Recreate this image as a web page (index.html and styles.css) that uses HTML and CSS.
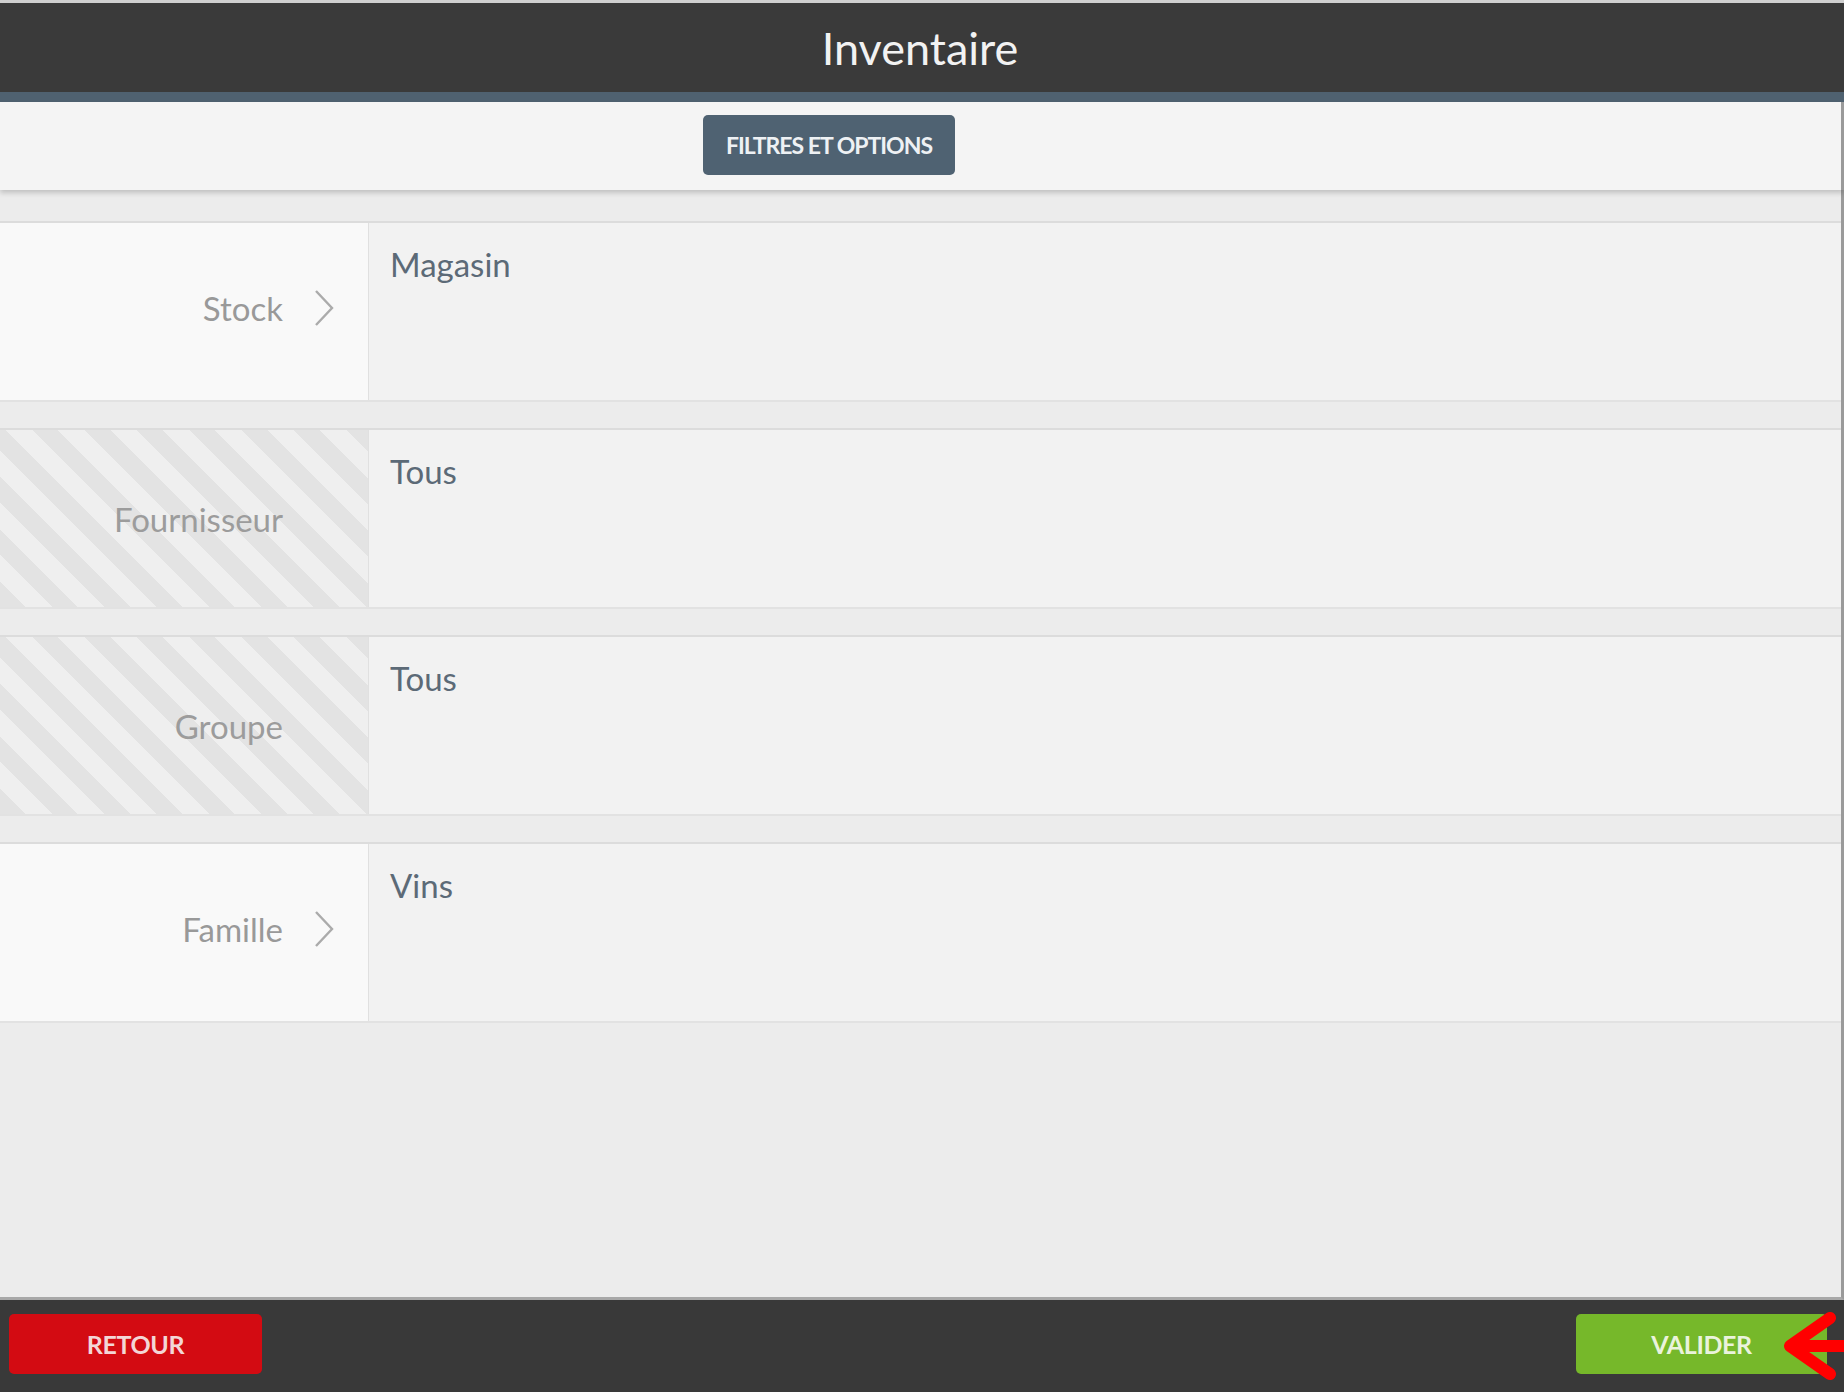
FILE: index.html
```html
<!DOCTYPE html>
<html lang="fr">
<head>
<meta charset="UTF-8">
<meta name="viewport" content="width=device-width, initial-scale=1.0">
<title>Inventaire</title>
<link rel="stylesheet" href="styles.css">
</head>
<body>

<div class="topbar">
    <h1>Inventaire</h1>
</div>

<div class="toolbar">
    <button class="btn-options">FILTRES ET OPTIONS</button>
</div>

<div class="rows">
    <div class="row">
        <div class="row-label">
            <span>Stock</span>
            <span class="chev">
                <svg width="20" height="38" viewBox="0 0 20 38"><path d="M2 2 L18 19 L2 36" fill="none" stroke="#ababab" stroke-width="2.4"/></svg>
            </span>
        </div>
        <div class="row-value">Magasin</div>
    </div>
    <div class="row disabled">
        <div class="row-label">
            <span>Fournisseur</span>
            <span class="chev"></span>
        </div>
        <div class="row-value">Tous</div>
    </div>
    <div class="row disabled">
        <div class="row-label">
            <span>Groupe</span>
            <span class="chev"></span>
        </div>
        <div class="row-value">Tous</div>
    </div>
    <div class="row">
        <div class="row-label">
            <span>Famille</span>
            <span class="chev">
                <svg width="20" height="38" viewBox="0 0 20 38"><path d="M2 2 L18 19 L2 36" fill="none" stroke="#ababab" stroke-width="2.4"/></svg>
            </span>
        </div>
        <div class="row-value">Vins</div>
    </div>
</div>

<div class="filler"></div>

<div class="footer">
    <button class="btn btn-back">RETOUR</button>
    <button class="btn btn-ok">VALIDER</button>
    <!-- annotation arrow from the screenshot -->
    <svg class="arrow" width="70" height="72" viewBox="0 0 70 72">
        <path d="M52 6 L12 34 L52 62 M14 34 L70 34" fill="none" stroke="#ff0000" stroke-width="12" stroke-linecap="round" stroke-linejoin="round"/>
    </svg>
</div>

</body>
</html>
```

FILE: styles.css
```css
body {
    margin: 0;
    padding: 0;
    width: 1844px;
    height: 1392px;
    display: flex;
    flex-direction: column;
    background-color: #ececec;
    font-family: Lato, "Open Sans", sans-serif;
    overflow: hidden;
}

.topbar {
    height: 89px;
    border-top: 3px solid #cfcfcf;
    border-bottom: 10px solid #4f6170;
    background-color: #3a3a3a;
    display: flex;
    align-items: center;
    justify-content: center;
    padding-right: 4px;
}

.topbar h1 {
    margin: 0;
    font-size: 45px;
    font-weight: 400;
    color: #f2f2f2;
}

.toolbar {
    height: 88px;
    background-color: #f4f4f4;
    border-right: 3px solid #9a9a9a;
    box-shadow: 0 3px 5px rgba(0, 0, 0, 0.18);
    position: relative;
    z-index: 1;
    padding-top: 13px;
    padding-left: 703px;
    box-sizing: border-box;
}

.btn-options {
    width: 252px;
    height: 60px;
    border: none;
    border-radius: 5px;
    background-color: #4f6272;
    color: #eef1f4;
    font-family: Lato, sans-serif;
    font-size: 23px;
    font-weight: 700;
    letter-spacing: -1px;
    padding: 0;
}

.rows {
    padding-top: 31px;
    display: flex;
    flex-direction: column;
    gap: 26px;
    border-right: 3px solid #9a9a9a;
}

.row {
    display: grid;
    grid-template-columns: 369px 1fr;
    height: 181px;
    box-sizing: border-box;
    border-top: 2px solid #dcdcdc;
    border-bottom: 2px solid #e2e2e2;
}

.row-label {
    background-color: #f9f9f9;
    border-right: 1px solid #e0e0e0;
    display: flex;
    align-items: center;
    justify-content: flex-end;
    font-size: 33px;
    color: #999999;
    padding-bottom: 7px;
}

.row.disabled .row-label {
    background: repeating-linear-gradient(45deg, #e3e3e3 0, #e3e3e3 18px, #efefef 18px, #efefef 37px);
    color: #9c9c9c;
    padding-bottom: 0;
}

.chev {
    width: 85px;
    padding-left: 31px;
    box-sizing: border-box;
    display: flex;
    align-items: center;
}

.row-value {
    background-color: #f2f2f2;
    padding: 21px 0 0 21px;
    font-size: 33px;
    color: #5c6a77;
}

.filler {
    flex: 1;
    border-right: 3px solid #9a9a9a;
    border-bottom: 3px solid #a8a8a8;
}

.footer {
    height: 92px;
    background-color: #393939;
    display: flex;
    justify-content: space-between;
    align-items: flex-start;
    padding: 14px 17px 0 9px;
    box-sizing: border-box;
    position: relative;
}

.btn {
    height: 60px;
    border: none;
    border-radius: 5px;
    font-family: Lato, sans-serif;
    font-size: 25px;
    font-weight: 700;
    letter-spacing: -0.4px;
    padding: 0;
}

.btn-back {
    width: 253px;
    background-color: #d30b12;
    color: #f3d6d6;
}

.btn-ok {
    width: 251px;
    background-color: #76b82a;
    color: #eaf3dc;
}

.arrow {
    position: absolute;
    right: -4px;
    top: 12px;
}
```
